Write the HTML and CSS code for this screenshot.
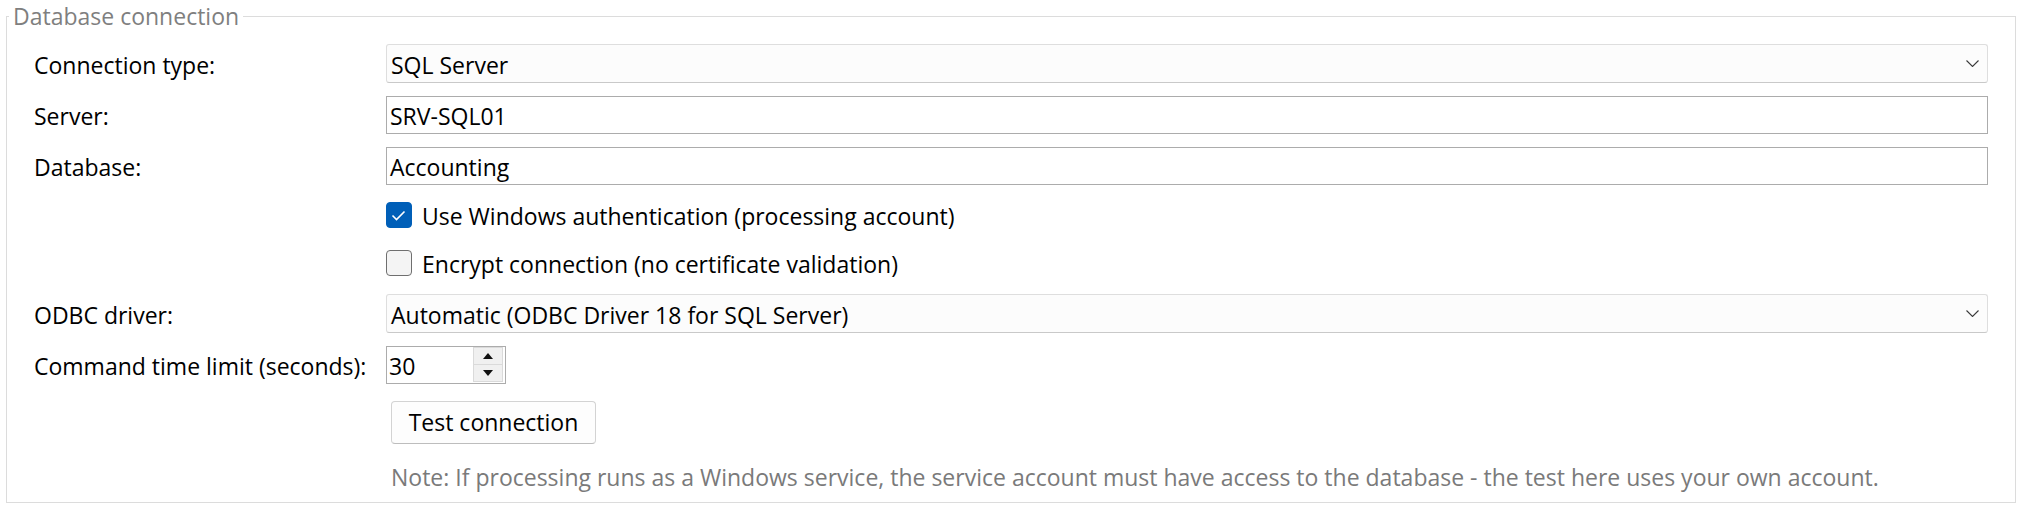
FILE: index.html
```html
<!DOCTYPE html>
<html lang="en">
<head>
<meta charset="utf-8">
<title>Database connection</title>
<link rel="stylesheet" href="styles.css">
</head>
<body>
<fieldset class="group">
  <legend class="group-title">Database connection</legend>
  <div class="form">
    <label class="field-label">Connection type:</label>
    <div class="combo">
      <span class="combo-text">SQL Server</span>
      <svg class="chevron" width="13" height="7" viewBox="0 0 13 7"><polyline points="0.5,0.5 6.5,6.5 12.5,0.5" fill="none" stroke="#3a3a3a" stroke-width="1.1"/></svg>
    </div>

    <label class="field-label">Server:</label>
    <div class="textbox">SRV-SQL01</div>

    <label class="field-label">Database:</label>
    <div class="textbox">Accounting</div>

    <div class="check-row check-row-first">
      <span class="checkbox checked">
        <svg width="26" height="26" viewBox="0 0 26 26"><polyline points="6.5,13.5 10.5,17.5 18.5,9.5" fill="none" stroke="#ffffff" stroke-width="1.6"/></svg>
      </span>
      <span class="check-text">Use Windows authentication (processing account)</span>
    </div>

    <div class="check-row check-row-second">
      <span class="checkbox"></span>
      <span class="check-text">Encrypt connection (no certificate validation)</span>
    </div>

    <label class="field-label odbc-label">ODBC driver:</label>
    <div class="combo odbc-combo">
      <span class="combo-text">Automatic (ODBC Driver 18 for SQL Server)</span>
      <svg class="chevron" width="13" height="7" viewBox="0 0 13 7"><polyline points="0.5,0.5 6.5,6.5 12.5,0.5" fill="none" stroke="#3a3a3a" stroke-width="1.1"/></svg>
    </div>

    <label class="field-label">Command time limit (seconds):</label>
    <div class="numeric">
      <span class="numeric-text">30</span>
      <div class="spinner">
        <span class="spin-btn"><span class="tri-up"></span></span>
        <span class="spin-btn"><span class="tri-down"></span></span>
      </div>
    </div>

    <div class="action-row">
      <button class="button" type="button">Test connection</button>
    </div>

    <p class="note">Note: If processing runs as a Windows service, the service account must have access to the database - the test here uses your own account.</p>
  </div>
</fieldset>
</body>
</html>
```
FILE: styles.css
```css
html, body {
  margin: 0;
  padding: 0;
  background: #ffffff;
}

body {
  font-family: "Open Sans", "Noto Sans", sans-serif;
  font-size: 23px;
  color: #000000;
}

.group {
  margin: 0 1px 0 6px;
  padding: 12px 27px 9px 27px;
  border: 1px solid #dcdcdc;
  min-inline-size: 0;
}

.group-title {
  margin-left: -25px;
  padding: 0 4px;
  line-height: 32px;
  color: #7f7f7f;
}

.form {
  display: grid;
  grid-template-columns: 352px 1fr;
  row-gap: 13px;
  align-items: baseline;
}

.field-label {
  grid-column: 1;
  line-height: 31px;
  white-space: nowrap;
}

.combo {
  grid-column: 2;
  display: flex;
  align-items: baseline;
  height: 39px;
  box-sizing: border-box;
  padding: 3px 0 0 4px;
  border: 1px solid #dedede;
  border-bottom-color: #c9c9c9;
  border-radius: 3px;
  background: #fcfcfc;
}

.combo-text {
  flex: 1;
  line-height: 34px;
}

.chevron {
  align-self: center;
  margin: -3px 8px 0 0;
}

.textbox {
  grid-column: 2;
  height: 38px;
  box-sizing: border-box;
  padding: 2px 0 0 3px;
  line-height: 34px;
  border: 1px solid #acacac;
  background: #ffffff;
}

.check-row {
  grid-column: 2;
  display: flex;
  align-items: center;
  gap: 10px;
  height: 26px;
}

.check-row-first {
  margin-top: 4px;
}

.check-row-second {
  margin-top: 9px;
}

.checkbox {
  width: 26px;
  height: 26px;
  box-sizing: border-box;
  border-radius: 4px;
  border: 1px solid #6f6f6f;
  background: #f4f4f4;
  display: flex;
}

.checkbox.checked {
  border-color: #005fb8;
  background: #005fb8;
}

.checkbox svg {
  margin: -1px;
}

.check-text {
  line-height: 26px;
  padding-top: 1px;
}

.odbc-label,
.odbc-combo {
  margin-top: 5px;
}

.numeric {
  grid-column: 2;
  justify-self: start;
  display: flex;
  align-items: baseline;
  width: 120px;
  height: 38px;
  box-sizing: border-box;
  padding: 2px 0 0 2px;
  border: 1px solid #acacac;
  background: #ffffff;
}

.numeric-text {
  flex: 1;
  line-height: 34px;
}

.spinner {
  align-self: stretch;
  display: flex;
  flex-direction: column;
  width: 30px;
  margin: -2px 2px 1px 0;
}

.spin-btn {
  flex: 1;
  display: flex;
  align-items: center;
  justify-content: center;
  background: #f0f0f0;
  border: 1px solid #dadada;
}

.spin-btn + .spin-btn {
  border-top: none;
}

.tri-up {
  width: 0;
  height: 0;
  border-left: 5px solid transparent;
  border-right: 5px solid transparent;
  border-bottom: 6px solid #111111;
}

.tri-down {
  width: 0;
  height: 0;
  border-left: 5px solid transparent;
  border-right: 5px solid transparent;
  border-top: 6px solid #111111;
}

.action-row {
  grid-column: 2;
  margin-top: 4px;
  padding-left: 5px;
}

.button {
  width: 205px;
  height: 43px;
  padding: 0 0 2px 0;
  font: inherit;
  color: #000000;
  background: #fdfdfd;
  border: 1px solid #d3d3d3;
  border-bottom-color: #bdbdbd;
  border-radius: 4px;
}

.note {
  grid-column: 2;
  margin: 5px 0 0 5px;
  line-height: 31px;
  color: #7a7a7a;
  white-space: nowrap;
}
```
